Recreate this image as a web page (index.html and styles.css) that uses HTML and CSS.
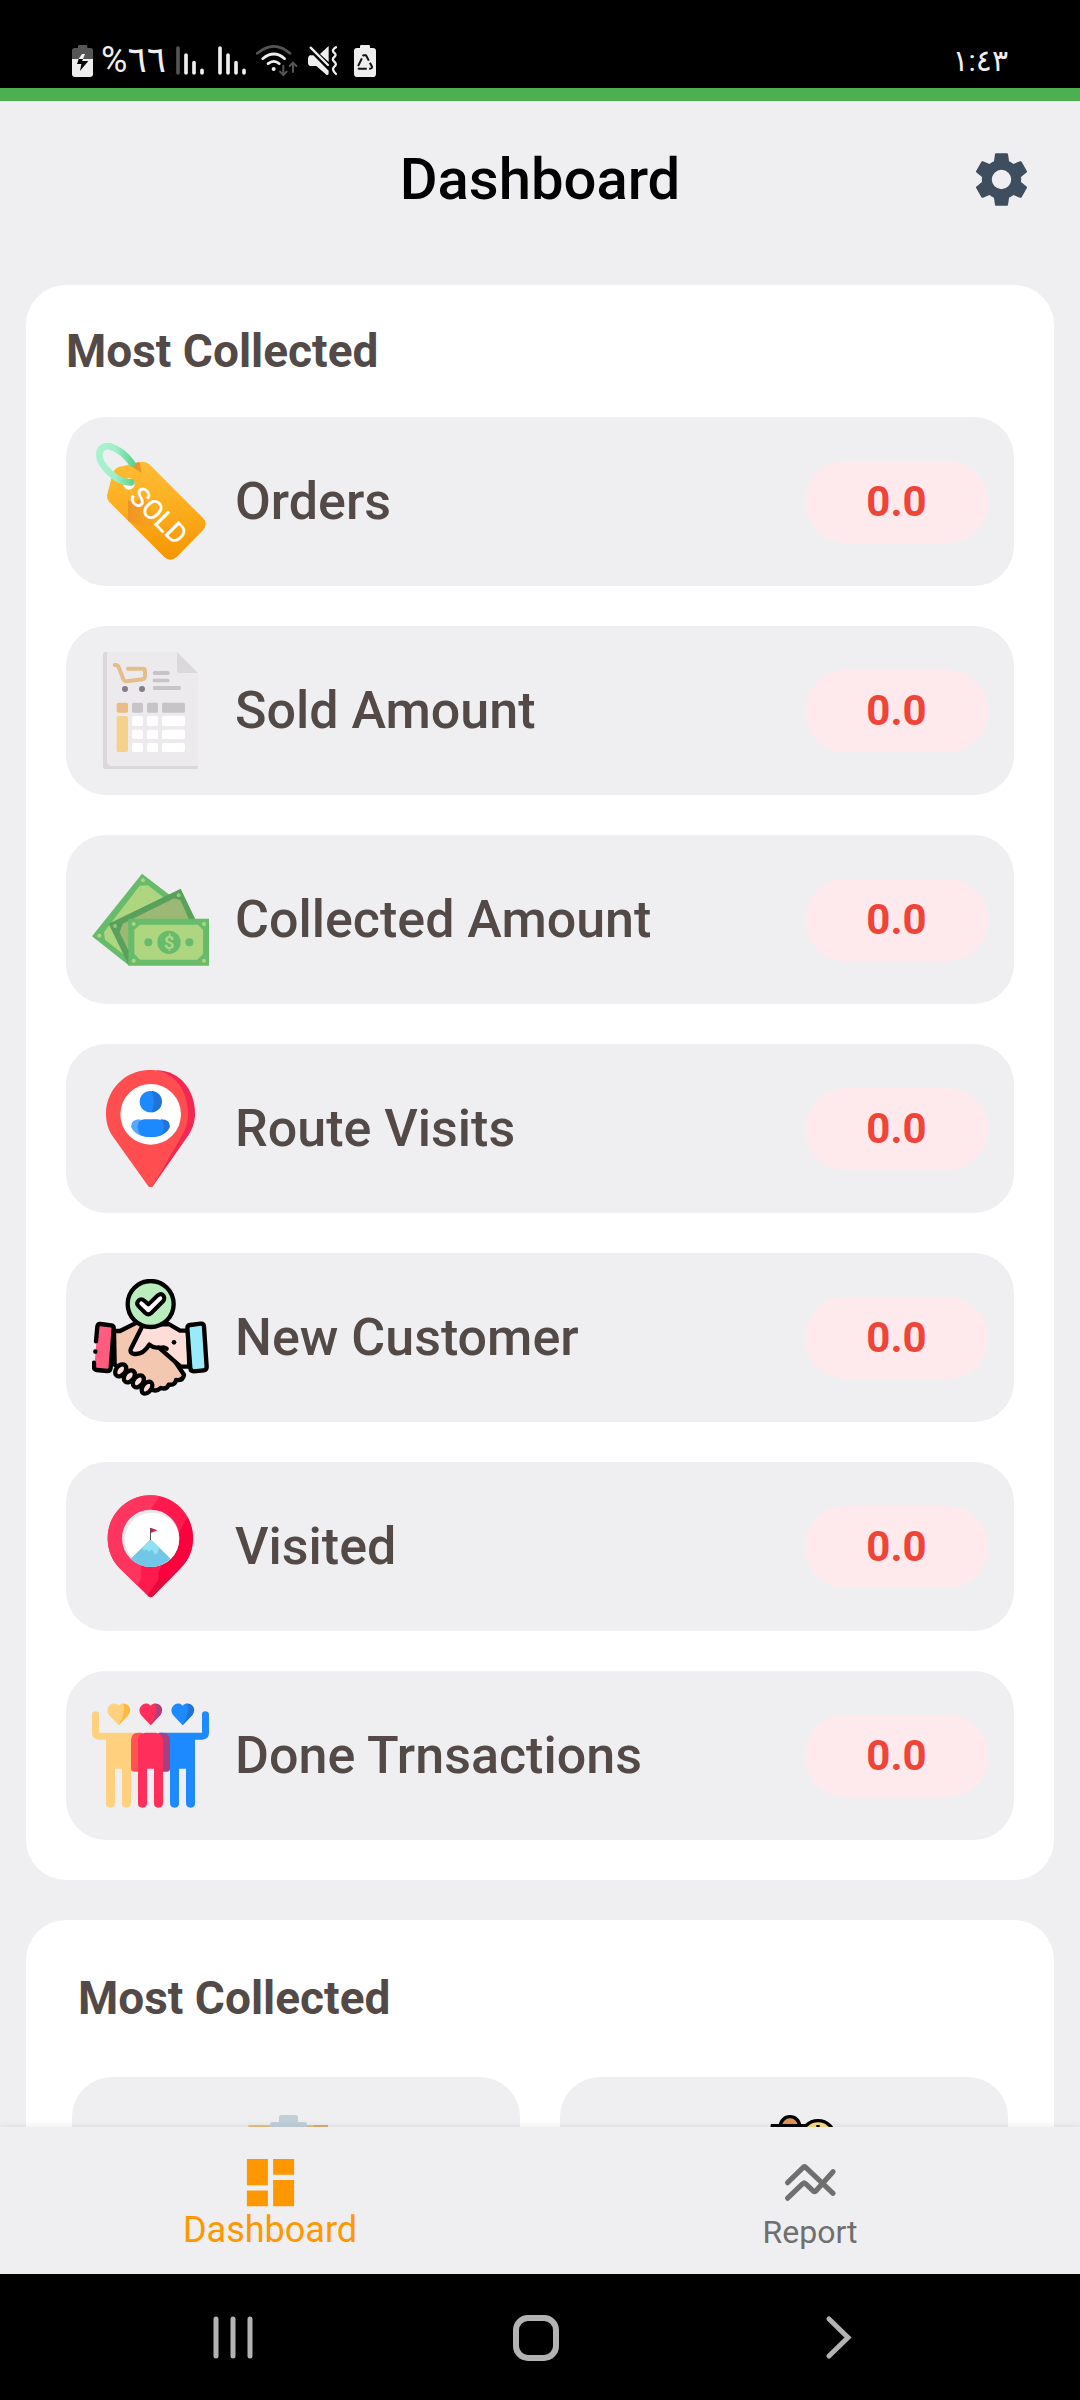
FILE: index.html
```html
<!DOCTYPE html>
<html lang="en">
<head>
<meta charset="utf-8">
<meta name="viewport" content="width=device-width, initial-scale=1">
<title>Dashboard</title>
<link rel="stylesheet" href="styles.css">
</head>
<body>
<div class="app">
  <div class="status">
    <div class="status-icons">
      <svg class="s-bat" viewBox="36 39 63 105" aria-hidden="true">
        <path fill="#555" d="M54 54v-5q0-4 4-4h20q4 0 4 4v5h9q8 0 8 8v26H36V62q0-8 8-8z"/>
        <path fill="#eee" d="M36 87h63v45q0 9-9 9H45q-9 0-9-9z"/>
        <path fill="#eee" d="M66 72h9l-6 15H56z"/>
        <path fill="#000" d="M56 87h13l-3 6h19l-25 30 4-21H51z"/>
      </svg>
      <span class="percent">%٦٦</span>
      <svg class="s-sig1" viewBox="348 39 102 105" aria-hidden="true" fill="none" stroke-width="11" stroke-linecap="round">
        <path stroke="#555" d="M354 54v75"/><path stroke="#eee" d="M378 75v54M402 98v31M426 121v8"/>
      </svg>
      <svg class="s-sig2" viewBox="474 39 90 105" aria-hidden="true" fill="none" stroke="#eee" stroke-width="11" stroke-linecap="round">
        <path d="M480 54v75M504 75v54M528 98v31M552 121v8"/>
      </svg>
      <svg class="s-wifi" viewBox="588 39 132 105" aria-hidden="true" fill="none" stroke-width="8" stroke-linecap="round">
        <path stroke="#555" d="M592 70q50-42 98 0"/>
        <path stroke="#eee" d="M608 86q34-28 66 0M624 101q18-14 34 0"/>
        <circle cx="641" cy="117" r="6" fill="#eee"/>
        <path stroke="#555" stroke-width="6" d="M670 107v27m-10-9l10 10 10-10M699 126V98m-10 10l10-10 10 10"/>
      </svg>
      <svg class="s-mute" viewBox="744 39 114 105" aria-hidden="true">
        <path fill="#eee" d="M780 72l26-24v48zM750 76q-6 2-6 10v12q0 10 10 10h15l30 26q7 3 7-4v-8l-46-46z"/>
        <path fill="none" stroke="#eee" stroke-width="7" stroke-linecap="round" stroke-linejoin="round" d="M752 53l52 52M828 52q-13 8-8 14 12 8 3 15-9 7 0 14 9 8 0 15-10 8 5 22"/>
      </svg>
      <svg class="s-eco" viewBox="882 39 66 105" aria-hidden="true">
        <path fill="#eee" d="M900 54v-5q0-4 4-4h22q4 0 4 4v5h9q9 0 9 9v68q0 10-10 10h-46q-10 0-10-10V63q0-9 9-9z"/>
        <path fill="none" stroke="#111" stroke-width="6" stroke-dasharray="26 7" stroke-linejoin="round" d="M910 76h8l18 34q1 6-6 6h-32q-7 0-4-7z"/>
      </svg>
    </div>
    <time class="clock" datetime="13:43">١:٤٣</time>
  </div>

  <header class="header">
    <h1>Dashboard</h1>
    <button class="settings" type="button" aria-label="Settings">
      <svg viewBox="0 0 24 24" aria-hidden="true"><path fill="#3e4e5e" d="M19.43 12.98c.04-.32.07-.64.07-.98s-.03-.66-.07-.98l2.11-1.65c.19-.15.24-.42.12-.64l-2-3.46c-.12-.22-.39-.3-.61-.22l-2.49 1c-.52-.4-1.08-.73-1.69-.98l-.38-2.65C14.46 2.18 14.25 2 14 2h-4c-.25 0-.46.18-.49.42l-.38 2.65c-.61.25-1.17.59-1.69.98l-2.49-1c-.23-.09-.49 0-.61.22l-2 3.46c-.13.22-.07.49.12.64l2.11 1.65c-.04.32-.07.65-.07.98s.03.66.07.98l-2.11 1.65c-.19.15-.24.42-.12.64l2 3.46c.12.22.39.3.61.22l2.49-1c.52.4 1.08.73 1.69.98l.38 2.65c.03.24.24.42.49.42h4c.25 0 .46-.18.49-.42l.38-2.65c.61-.25 1.17-.59 1.69-.98l2.49 1c.23.09.49 0 .61-.22l2-3.46c.12-.22.07-.49-.12-.64l-2.11-1.65zM12 15.7a3.7 3.7 0 1 1 0-7.4 3.7 3.7 0 0 1 0 7.4z"/></svg>
    </button>
  </header>

  <main class="content">
    <section class="card">
      <h2>Most Collected</h2>
      <ul class="rows">
        <li class="row">
          <svg class="icon" viewBox="96 129 351 351" aria-hidden="true">
            <defs>
              <linearGradient id="tag" x1="0" y1="0" x2="0" y2="1"><stop offset="0" stop-color="#ffbc33"/><stop offset=".45" stop-color="#fdae20"/><stop offset="1" stop-color="#f59500"/></linearGradient>
              <linearGradient id="ring" x1="0" y1="0" x2="1" y2="0"><stop offset="0" stop-color="#a7f3ce"/><stop offset=".5" stop-color="#a0efc9"/><stop offset="1" stop-color="#5fd68f"/></linearGradient>
              <linearGradient id="fold" x1="0" y1="0" x2="1" y2="1"><stop offset="0" stop-color="#e5872b"/><stop offset="1" stop-color="#e5872b" stop-opacity="0"/></linearGradient>
            </defs>
            <path fill="url(#tag)" d="M176 201l70-16q13-1 22 8l162 162q14 16 0 34l-80 82q-19 17-37 0L148 306q-10-10-6-24l14-54q4-21 20-27z"/>
            <path fill="url(#fold)" d="M205 192l34-6 6 34zM204 300q32 22 38-24l40 74-10 40-26-8-42-20z"/>
            <circle cx="207" cy="252" r="17" fill="#fff"/>
            <path fill="none" stroke="url(#ring)" stroke-width="20" stroke-linecap="round" d="M214 247c-40 4-98-50-96-84 4-46 62-22 98 27"/>
            <text class="sold" transform="translate(204 295) rotate(45)">SOLD</text>
          </svg>
          <span class="name">Orders</span><output class="value">0.0</output>
        </li>
        <li class="row">
          <svg class="icon" viewBox="96 756 351 351" aria-hidden="true">
            <path fill="#dad8db" d="M135 756h206l73 100v251H135q-6 0-6-6V762q0-6 6-6z"/>
            <path fill="#eceaec" d="M141 756h210l63 63v279H157q-16 0-16-16z"/>
            <path fill="#dad8db" d="M351 756l63 63h-57q-6 0-6-6z"/>
            <path fill="none" stroke="#e5bd8b" stroke-width="12" stroke-linecap="round" stroke-linejoin="round" d="M164 795q9-1 12 6l14 36q3 7 11 7l45-6q9-1 9-9v-16q0-7-7-7h-44"/>
            <g fill="#857d89"><circle cx="195" cy="867" r="9"/><circle cx="246" cy="867" r="9"/></g>
            <g fill="#c6c4c7"><rect x="278" y="813" width="51" height="12" rx="6"/><rect x="278" y="836" width="51" height="11" rx="5"/><rect x="278" y="858" width="85" height="12" rx="6"/><rect x="216" y="908" width="33" height="30" rx="5"/><rect x="261" y="908" width="33" height="30" rx="5"/><rect x="306" y="908" width="69" height="30" rx="5"/></g>
            <rect x="170" y="908" width="34" height="30" rx="5" fill="#eabc83"/>
            <rect x="170" y="948" width="34" height="108" rx="5" fill="#f6d18b"/>
            <g fill="#fff"><rect x="216" y="948" width="33" height="30" rx="5"/><rect x="261" y="948" width="33" height="30" rx="5"/><rect x="306" y="948" width="69" height="30" rx="5"/><rect x="216" y="989" width="33" height="28" rx="5"/><rect x="261" y="989" width="33" height="28" rx="5"/><rect x="306" y="989" width="69" height="28" rx="5"/><rect x="216" y="1029" width="33" height="27" rx="5"/><rect x="261" y="1029" width="33" height="27" rx="5"/><rect x="306" y="1029" width="69" height="27" rx="5"/></g>
          </svg>
          <span class="name">Sold Amount</span><output class="value">0.0</output>
        </li>
        <li class="row">
          <svg class="icon" viewBox="96 154 351 351" aria-hidden="true">
            <path fill="#67bb6a" d="M246 192L96 380l110 87 130-206z"/>
            <path fill="#aed680" d="M239 228l25-1 48 37-94 170-28 0-55-44-3-23z"/>
            <g fill="#aed680"><circle cx="249" cy="212" r="6"/><circle cx="118" cy="378" r="6"/></g>
            <path fill="#58a05c" d="M362 237L146 342l60 125 204-130z"/>
            <path fill="#9bb974" d="M342 266l20 6 24 56-182 92-25-52 9-26z"/>
            <g fill="#9bc578"><circle cx="356" cy="257" r="6"/><circle cx="165" cy="349" r="6"/></g>
            <path fill="#67bb6a" d="M205 327h242v141H205z"/>
            <path fill="#aed680" d="M240 345h174l15 15v73l-17 17H240l-17-17v-73z"/>
            <g fill="#aed680"><circle cx="221" cy="343" r="6"/><circle cx="432" cy="343" r="6"/><circle cx="221" cy="453" r="6"/><circle cx="432" cy="453" r="6"/></g>
            <g fill="#67bb6a"><circle cx="327" cy="398" r="35"/><circle cx="265" cy="398" r="12"/><circle cx="388" cy="398" r="12"/></g>
            <text class="dollar" x="327" y="418">$</text>
          </svg>
          <span class="name">Collected Amount</span><output class="value">0.0</output>
        </li>
        <li class="row">
          <svg class="icon" viewBox="96 782 351 351" aria-hidden="true">
            <path fill="#f3274f" d="M290 783c68 0 115 58 115 130 0 24-8 46-20 65l-106 152q-3 4-8 4z"/>
            <path fill="#ff4d50" d="M262 782c74-5 122 56 122 131 0 24-6 46-18 66l-88 152q-6 6-13 0L157 979c-12-18-19-40-19-66 0-70 56-128 124-131z"/>
            <circle cx="272" cy="915" r="91" fill="#fff"/>
            <circle cx="271" cy="877" r="32" fill="#1d89ff"/><path fill="#2074d8" d="M274 845a32 32 0 0 1 0 64q16-32 0-64z"/>
            <path fill="#59a6ff" d="M240 930q-27 0-27 22c8 18 27 31 58 31z"/>
            <path fill="#2074d8" d="M303 930q27 0 27 22c-8 18-27 31-58 31z"/>
            <path fill="#1d89ff" d="M254 930h38q20 1 20 20 0 22-12 29-28 8-55 0-12-8-12-29 2-19 21-20z"/>
          </svg>
          <span class="name">Route Visits</span><output class="value">0.0</output>
        </li>
        <li class="row">
          <svg class="icon" viewBox="96 149 351 351" aria-hidden="true">
            <g stroke="#000" stroke-width="13" stroke-linejoin="round" stroke-linecap="round">
              <path fill="#f4c7b0" d="M162 305h18l50-25 42 8 100 148q-2 18-24 16-2 16-22 14-6 16-24 10-14 14-30 2l-108-72z"/>
              <path fill="#ffdeda" d="M246 292l26-6 54-2 34 20h24l4 108h-26l-66-58q-14 4-28-8-18 30-44 28-18-2-10-18z"/>
              <path fill="none" d="M300 356l12-2 8 4"/>
              <g fill="#ffdeda"><ellipse cx="182" cy="423" rx="14" ry="20" transform="rotate(38 182 423)"/><ellipse cx="208" cy="441" rx="14" ry="20" transform="rotate(38 208 441)"/><ellipse cx="235" cy="456" rx="14" ry="20" transform="rotate(38 235 456)"/><ellipse cx="261" cy="475" rx="13" ry="20" transform="rotate(38 261 475)"/></g>
              <path fill="#ff5c7f" stroke="none" d="M114 284h48l-12 140h-48z"/>
              <path fill="none" d="M108 336l4-44q1-9 10-8l32 4q8 1 7 9l-9 118q-1 10-10 10l-32-3q-9-1-8-10v-12M106 366v1"/>
              <path fill="#99ebfa" d="M390 287l32-4q9-1 10 8l8 122q0 9-9 10l-30 3q-9 0-10-9l-9-120q0-9 8-10z"/>
              <circle cx="272" cy="224" r="69" fill="#b9edbd"/>
              <path fill="#fff" stroke-width="12" d="M236 213q8-7 17 1l12 11 28-27q10-7 17 0 6 9 0 17l-36 36q-9 8-18 0l-22-22q-6-8 2-16z"/>
            </g>
            <circle cx="342" cy="339" r="7"/>
          </svg>
          <span class="name">New Customer</span><output class="value">0.0</output>
        </li>
        <li class="row">
          <svg class="icon" viewBox="96 778 351 351" aria-hidden="true">
            <path fill="#ff1a4e" d="M272 800c71 0 127 57 127 128 0 34-12 64-34 87l-86 88q-7 6-14 0l-86-84c-22-23-36-53-36-91 0-71 58-128 129-128z"/>
            <path fill="#ff345f" d="M272 800q14 0 25 3-4 14-22 34l-32 180q4 40-12 52l-52-50c-22-23-36-53-36-91 0-71 58-128 129-128z"/>
            <path fill="#fb003c" d="M382 866q17 30 17 62c0 34-12 64-34 87l-45 46q-22 4-24-12v-20z"/>
            <path fill="#e50a3a" d="M296 1052q42 0 69-37l-86 88q-7 6-14 0l-3-4z"/>
            <circle cx="272" cy="929" r="86" fill="#e6e8ea"/><circle cx="276" cy="933" r="81" fill="#fff"/>
            <path fill="#70c7e8" d="M212 990l60-58 60 58q-26 25-60 25t-60-25z"/>
            <path fill="#8ee2f4" d="M246 958l26-26 26 26-6 16-8 4-8-16-10 7-6-7-8 4z"/>
            <path fill="#555" d="M270 898h3v36h-3z"/><path fill="#e0184a" d="M272 897l20 8-20 8z"/>
          </svg>
          <span class="name">Visited</span><output class="value">0.0</output>
        </li>
        <li class="row">
          <svg class="icon" viewBox="96 145 351 351" aria-hidden="true">
            <defs><path id="heart" d="M35 65L6 34C-10 12 18-12 35 6 52-12 80 12 64 34z"/><path id="half" d="M49 0C68 0 76 18 64 34L35 65Q58 22 49 0z"/></defs>
            <use href="#heart" x="141" y="165" fill="#ffd17f"/><use href="#half" x="141" y="165" fill="#ffb93d"/>
            <use href="#heart" x="237" y="165" fill="#ff2e5b"/><use href="#half" x="237" y="165" fill="#b43f78"/>
            <use href="#heart" x="333" y="165" fill="#1d8aff"/><use href="#half" x="333" y="165" fill="#2074d8"/>
            <path fill="#ffd17f" d="M96 199q0-11 11-11t10 11v53h120v108h-24v103q0 14-14 14t-13-14V360h-21v103q0 14-14 14t-13-14V273h-22q-20-2-20-20z"/>
            <path fill="#1d8aff" d="M447 199q0-11-11-11t-10 11v53H300v108h30v103q0 14 14 14t13-14V360h21v103q0 14 14 14t13-14V273h22q20-2 20-20z"/>
            <path fill="#ff5452" d="M235 252h12v117h-24q-10 0-10-8v-86q0-22 22-23z"/>
            <path fill="#a83f80" d="M296 252h12q22 2 22 23v86q0 8-10 8h-11z"/>
            <path fill="#ff2e5b" d="M256 252h31q22 2 22 25v186q0 14-14 14t-13-14V360h-21v103q0 14-14 14t-13-14V277q0-23 22-25z"/>
          </svg>
          <span class="name">Done Trnsactions</span><output class="value">0.0</output>
        </li>
      </ul>
    </section>

    <section class="card card-grid">
      <h2>Most Collected</h2>
      <div class="tiles">
        <article class="tile">
          <svg class="icon" viewBox="21 138 351 351" aria-hidden="true">
            <path fill="#e9c17c" d="M52 168h198v321H52z"/><path fill="#dcae6c" d="M248 168h43v321h-43z"/>
            <path fill="#c1cfd9" d="M144 159v-13q0-8 8-8h41q8 0 8 8v13h19q8 0 8 8v30H117v-30q0-8 8-8z"/>
          </svg>
        </article>
        <article class="tile">
          <svg class="icon" viewBox="17 138 351 351" aria-hidden="true">
            <g stroke="#000" stroke-width="10">
              <circle cx="209" cy="172" r="29" fill="#df9458"/>
              <circle cx="293" cy="205" r="50" fill="#f8dc83"/>
              <path fill="#df9458" d="M156 170h98v100H140z"/>
            </g>
            <path d="M288 168h10v6h-10z"/>
          </svg>
        </article>
      </div>
    </section>
  </main>

  <nav class="tabs" aria-label="Main">
    <a class="tab tab-active" href="#dashboard" aria-current="page">
      <svg viewBox="0 0 24 24" aria-hidden="true"><path fill="currentColor" d="M3 13h8V3H3v10zm0 8h8v-6H3v6zm10 0h8V11h-8v10zm0-18v6h8V3h-8z"/></svg>
      <span>Dashboard</span>
    </a>
    <a class="tab" href="#report">
      <svg viewBox="693 842 183 183" aria-hidden="true" fill="none" stroke="currentColor" stroke-width="15" stroke-linecap="round" stroke-linejoin="round"><path d="M718 934l47-46q2-1 4 0l81 77M718 979l44-42q4-4 8 0l22 21q4 4 8 0l50-56"/></svg>
      <span>Report</span>
    </a>
  </nav>

  <div class="system">
    <button type="button" aria-label="Recent apps"><svg viewBox="0 0 48 48" aria-hidden="true" fill="none" stroke="#b3b3b3" stroke-width="5" stroke-linecap="round"><path d="M7 6v37M24 6v37M41 6v37"/></svg></button>
    <button type="button" aria-label="Home"><svg viewBox="0 0 48 48" aria-hidden="true" fill="none" stroke="#b3b3b3" stroke-width="6"><rect x="4" y="5" width="40" height="40" rx="12"/></svg></button>
    <button type="button" aria-label="Back"><svg viewBox="0 0 48 48" aria-hidden="true" fill="none" stroke="#b3b3b3" stroke-width="5" stroke-linecap="round"><path d="M14 6l19 18.500L14 43"/></svg></button>
  </div>
</div>
</body>
</html>
```
FILE: styles.css
```css
* { box-sizing: border-box; }
body { margin: 0; font-family: Roboto, "DejaVu Sans", sans-serif; color: #534a48; background: #efeff1; }
h1, h2, ul { margin: 0; padding: 0; }
svg { display: block; }
button { border: 0; padding: 0; background: none; cursor: pointer; }

.app { display: flex; flex-direction: column; height: 100vh; }

/* Status bar */
.status {
  display: flex; justify-content: space-between; flex: none;
  padding: 43px 72px 10px; background: #000; border-bottom: 13px solid #4caf50;
  color: #eee; font-size: 30px; line-height: 35px;
}
.status-icons { display: flex; gap: 8px; }
.status-icons svg { height: 35px; }
.percent { width: 67px; font-size: 36px; white-space: nowrap; }
.clock { direction: ltr; }
.s-bat { width: 21px; }
.s-sig1 { width: 34px; }
.s-sig2 { width: 30px; }
.s-wifi { width: 44px; }
.s-mute { width: 38px; }
.s-eco { width: 22px; }

/* Title bar */
.header {
  display: grid; grid-template-columns: 63px 1fr 63px; align-items: center; flex: none;
  height: 156px; padding: 0 47px;
}
.header h1 { grid-column: 2; text-align: center; font-size: 58px; line-height: 68px; font-weight: 500; color: #000; }
.settings svg { width: 63px; height: 63px; }

/* Scrolling content */
.content {
  flex: 1; min-height: 0; overflow-y: auto; scrollbar-width: none;
  display: flex; flex-direction: column; gap: 40px; padding: 28px 26px;
}
.card { flex: none; padding: 40px; border-radius: 40px; background: #fff; }
.card h2 { margin-bottom: 40px; font-size: 46px; line-height: 52px; font-weight: 700; }
.rows { display: flex; flex-direction: column; gap: 40px; list-style: none; }
.row {
  display: flex; align-items: center; gap: 26px;
  padding: 26px; border-radius: 40px; background: #efeff1;
}
.icon { flex: none; width: 117px; height: 117px; }
.name { flex: 1; font-size: 52px; line-height: 60px; font-weight: 500; }
.value {
  width: 183px; border-radius: 40px; background: #feeaec; color: #f04438;
  text-align: center; font-size: 42px; line-height: 82px; font-weight: 700;
}
.sold { font: 82px Roboto, sans-serif; fill: #fff; stroke: #fff; stroke-width: 1px; }
.dollar { font: 700 56px Roboto, sans-serif; fill: #aed680; text-anchor: middle; }

.card-grid { padding: 52px 46px 46px; }
.card-grid h2 { margin: 0 6px 53px; }
.tiles { display: grid; grid-template-columns: 1fr 1fr; gap: 40px; }
.tile { display: flex; justify-content: center; height: 300px; padding-top: 38px; border-radius: 40px; background: #efeff1; }

/* Bottom tabs */
.tabs {
  display: grid; grid-template-columns: 1fr 1fr; flex: none; position: relative;
  height: 147px; padding-top: 24px; background: #efeff1; box-shadow: 0 0 8px rgba(0, 0, 0, .1);
}
.tab {
  display: flex; flex-direction: column; align-items: center;
  color: #6f6f6f; text-decoration: none; font-size: 32px; line-height: 36px;
}
.tab svg { width: 63px; height: 63px; }
.tab-active { color: #ff9800; font-size: 36px; line-height: 32px; }

/* System navigation */
.system {
  display: grid; grid-template-columns: repeat(3, 1fr); place-items: center; flex: none;
  height: 126px; padding: 0 90px 0 81px; background: #000;
}
.system svg { width: 48px; height: 48px; }
```
